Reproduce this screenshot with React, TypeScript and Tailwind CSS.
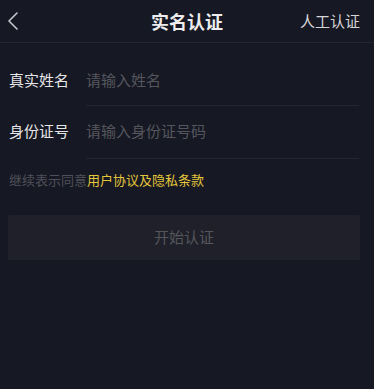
import React from "react";

export default function App() {
  const font = { fontFamily: '"Noto Sans CJK SC", "Noto Sans", sans-serif' };
  return (
    <div className="w-[374px] h-[389px] bg-[#161823] flex flex-col" style={font}>
      <div className="relative h-[43px] border-b border-[#23252f] flex items-center justify-center">
        <svg className="absolute left-[6px] top-[11px]" width="14" height="20" viewBox="0 0 14 20">
          <polyline points="11,2 3,10 11,18" fill="none" stroke="#c8c8cc" strokeWidth="1.6" strokeLinecap="round" strokeLinejoin="round" />
        </svg>
        <div className="text-[18px] leading-[22px] font-bold text-[#ededef] -mt-[1px]">实名认证</div>
        <div className="absolute right-[14px] top-[10px] text-[15px] leading-[22px] text-[#d6d6d9]">人工认证</div>
      </div>

      <div className="flex items-start pt-[26px]">
        <div className="w-[86px] pl-[9px] text-[15px] leading-[22px] text-[#e6e6e8]">真实姓名</div>
        <div className="flex-1 mr-[15px] pb-[14px] border-b border-[#23252f] text-[15px] leading-[22px] text-[#55565d]">请输入姓名</div>
      </div>

      <div className="flex items-start pt-[14px]">
        <div className="w-[86px] pl-[9px] text-[15px] leading-[22px] text-[#e6e6e8]">身份证号</div>
        <div className="flex-1 mr-[15px] pb-[16px] border-b border-[#23252f] text-[15px] leading-[22px] text-[#55565d]">请输入身份证号码</div>
      </div>

      <div className="mt-[12px] pl-[9px] text-[13px] leading-[18px] text-[#4f5058]">
        继续表示同意<span className="text-[#e3c63b]">用户协议及隐私条款</span>
      </div>

      <div className="mt-[26px] mx-[8px] w-[352px] h-[45px] rounded-[2px] bg-[#1f2029] flex items-center justify-center text-[15px] text-[#55565c]">
        开始认证
      </div>
    </div>
  );
}
